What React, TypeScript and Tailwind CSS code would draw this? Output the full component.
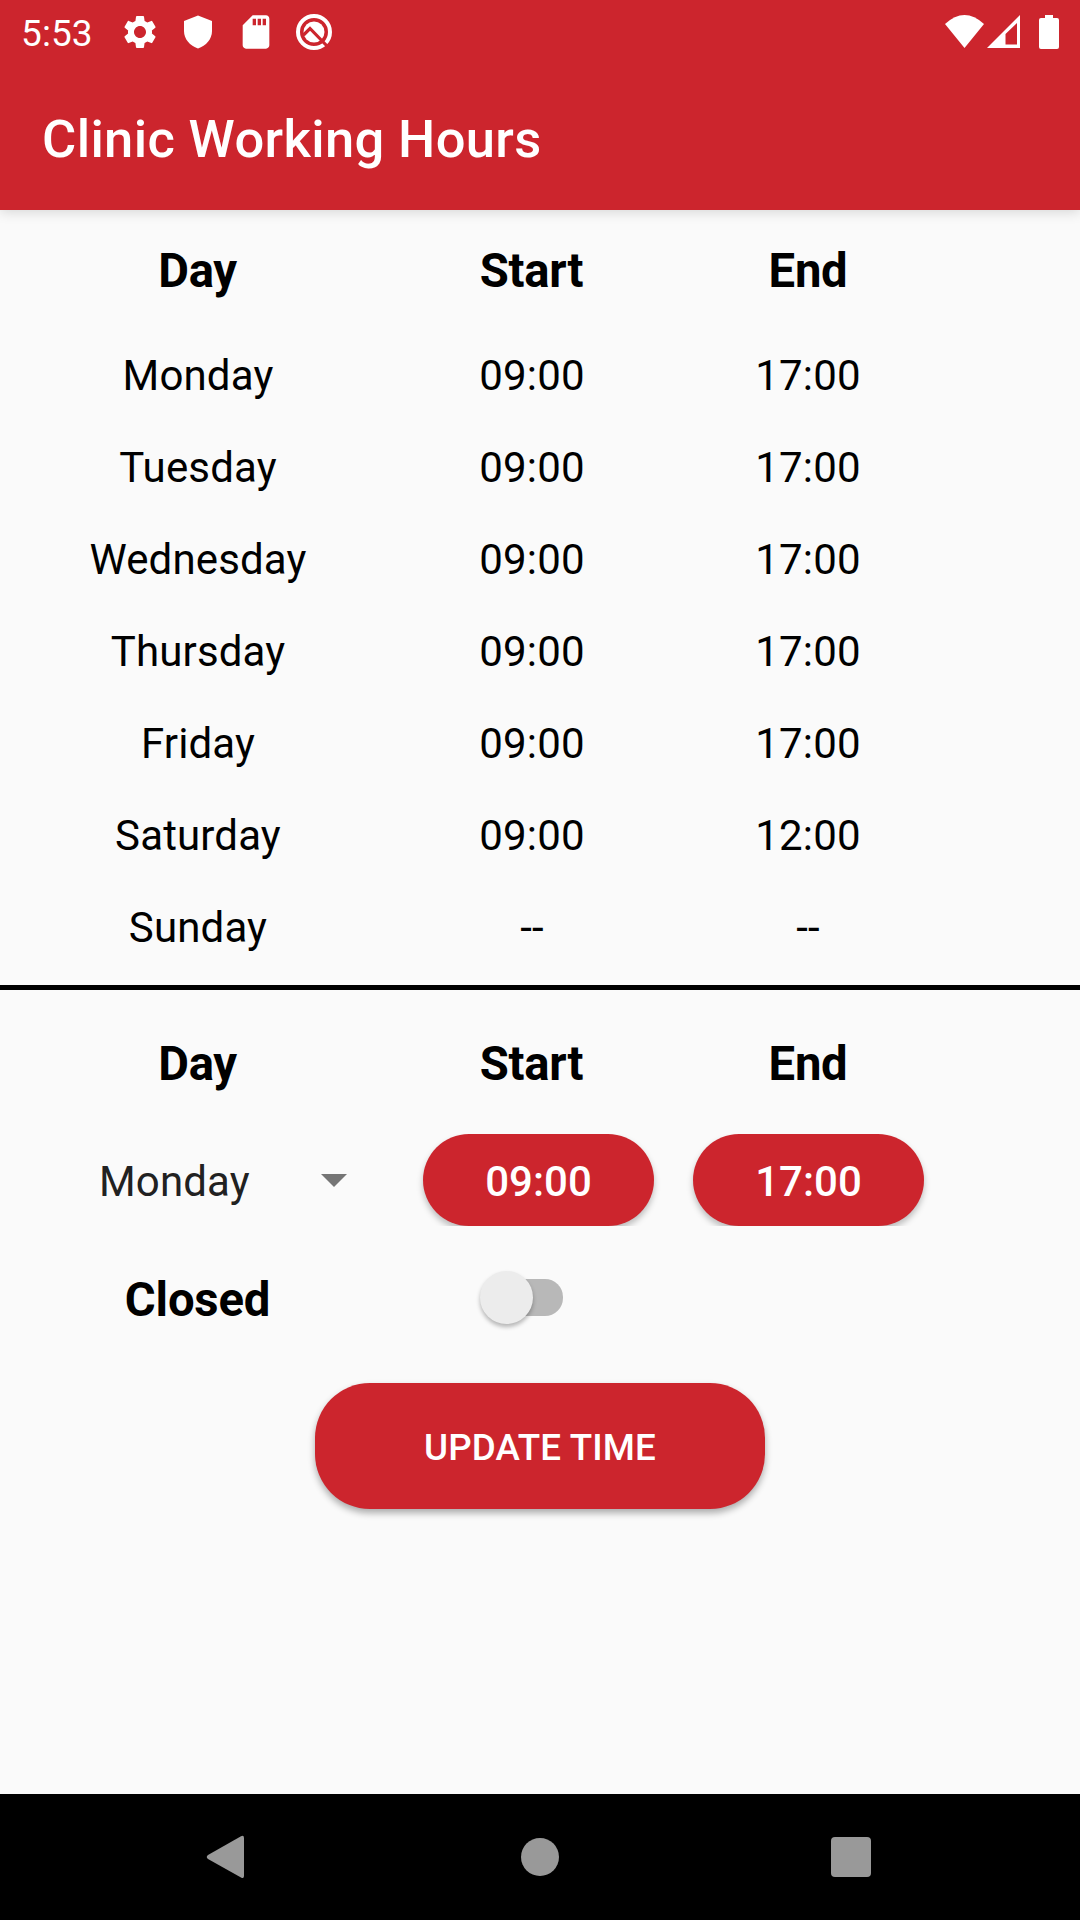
import { useState } from "react";
import { MdSettings, MdSdCard } from "react-icons/md";

const hours = [
  ["Monday", "09:00", "17:00"],
  ["Tuesday", "09:00", "17:00"],
  ["Wednesday", "09:00", "17:00"],
  ["Thursday", "09:00", "17:00"],
  ["Friday", "09:00", "17:00"],
  ["Saturday", "09:00", "12:00"],
  ["Sunday", "--", "--"],
];

function StatusBar() {
  return (
    <div className="flex h-[63px] items-center justify-between pl-[21px] pr-[21px]">
      <div className="flex items-center">
        <span className="w-[99px] pt-[3px] text-[37px] leading-[63px] tracking-[0.1px]">5:53</span>
        <MdSettings className="size-[40px]" />
        <svg className="ml-[18px] size-[40px]" viewBox="0 0 40 40" fill="currentColor">
          <path d="M20 3.5 L34 9 V19 C34 27 28 34 20 36.500 C12 34 6 27 6 19 V9 Z" />
        </svg>
        <MdSdCard className="ml-[18px] size-[40px]" />
        <svg className="ml-[18px] size-[40px]" viewBox="0 0 40 40" fill="none">
          <circle cx="20" cy="20" r="16" stroke="white" strokeWidth="4" />
          <circle cx="20" cy="20" r="10.5" fill="white" />
          <path d="M9.500 23 L16 16.500 L34 35" stroke="#cc252d" strokeWidth="3.2" />
        </svg>
      </div>
      <svg className="h-[40px] w-[115px]" viewBox="944 11 115 40" fill="none">
        <path d="M945 23 Q964.500 5 984 23 L964.500 47 Z" fill="white" />
        <path d="M987 47 L1020 14 V47 Z M1005.500 33 V43.500 H1017 V22 Z" fill="white" fillRule="evenodd" />
        <path d="M1045 14 H1053 V17 H1057 Q1059 17 1059 19 V46 Q1059 48 1057 48 H1041 Q1039 48 1039 46 V19 Q1039 17 1041 17 H1045 Z" fill="white" />
      </svg>
    </div>
  );
}

function Headings() {
  return (
    <div className="grid h-[120px] grid-cols-[395px_273px_280px] items-center pt-[2px] text-center text-[47.25px] font-bold leading-[56px] tracking-[-0.3px]">
      <span>Day</span>
      <span>Start</span>
      <span>End</span>
    </div>
  );
}

function TimeButton({ children }: { children: string }) {
  return (
    <div className="h-[92px] overflow-y-clip">
      <button className="h-[92px] w-[231px] rounded-[46px] bg-[#cc252d] pt-[2px] text-[42px] font-medium leading-[90px] text-white shadow-[0_4px_6px_rgba(0,0,0,0.25)]">
        <span className="block pt-px">{children}</span>
      </button>
    </div>
  );
}

export default function App() {
  const [closed, setClosed] = useState(false);
  return (
    <div className="flex h-[1920px] w-[1080px] flex-col overflow-hidden bg-[#fafafa] font-['Roboto',sans-serif] text-black">
      <header className="z-10 h-[210px] shrink-0 bg-[#cc252d] text-white shadow-[0_2px_12px_rgba(0,0,0,0.15)]">
        <StatusBar />
        <h1 className="pl-[42px] pt-px text-[52.5px] font-medium leading-[150px] tracking-[0.36px]">Clinic Working Hours</h1>
      </header>

      <main className="flex-1">
        <Headings />
        <div className="h-[655px]">
          {hours.map(([day, start, end]) => (
            <div key={day} className="grid h-[92px] grid-cols-[396px_272px_280px] text-center text-[42px] leading-[92px] tracking-[0.15px]">
              <span>{day}</span>
              <span>{start}</span>
              <span>{end}</span>
            </div>
          ))}
        </div>
        <div className="h-[5px] bg-black" />
        <div className="pt-[13px]">
          <Headings />
        </div>
        <div className="mt-[11px] flex h-[92px]">
          <button className="flex w-[423px] items-center pl-[99px] text-[#212121]">
            <span className="w-[222px] pt-1 text-left text-[42px] leading-[92px] tracking-[0.15px]">Monday</span>
            <svg className="h-[13px] w-[26px]" viewBox="0 0 26 13">
              <path d="M0 0 H26 L13 13 Z" fill="#757575" />
            </svg>
          </button>
          <div className="flex gap-[39px]">
            <TimeButton>09:00</TimeButton>
            <TimeButton>17:00</TimeButton>
          </div>
        </div>
        <div className="mt-[11px] flex h-[120px] items-center">
          <span className="w-[395px] pt-[6px] text-center text-[47.25px] font-bold leading-[56px] tracking-[-0.2px]">Closed</span>
          <button
            role="switch"
            aria-checked={closed}
            aria-label="Closed"
            onClick={() => setClosed(!closed)}
            className="ml-[85px] flex h-[53px] w-[83px] items-center"
          >
            <span className="ml-[8px] h-[37px] w-[75px] rounded-[18px] bg-[#b8b8b8]" />
            <span className="-ml-[83px] size-[53px] shrink-0 rounded-full bg-[#ececec] shadow-[0_3px_4px_rgba(0,0,0,0.28)]" />
          </button>
        </div>
        <div className="mt-[26px] flex justify-center">
          <button className="h-[126px] w-[450px] rounded-[55px] bg-[#cc252d] pt-[4px] text-[36.75px] font-medium tracking-[0.15px] text-white shadow-[0_4px_7px_rgba(0,0,0,0.32)]">
            UPDATE TIME
          </button>
        </div>
      </main>

      <nav className="flex h-[126px] shrink-0 items-center bg-black pl-[206px] text-[#999999]">
        <svg className="h-[44px] w-[38px]" viewBox="0 0 38 44" fill="currentColor">
          <path d="M35 1.200 Q38 0 38 3 V41 Q38 44 35 42.500 L2 24 Q-0.500 22 2 20 Z" />
        </svg>
        <span className="ml-[277px] size-[38px] rounded-full bg-[#999999]" />
        <span className="ml-[272px] size-[40px] rounded-[4px] bg-[#999999]" />
      </nav>
    </div>
  );
}
